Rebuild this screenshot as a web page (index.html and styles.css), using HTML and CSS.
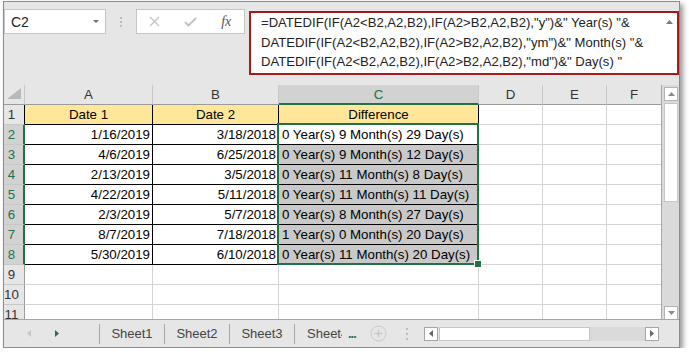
FILE: index.html
```html
<!DOCTYPE html>
<html lang="en">
<head>
    <meta charset="UTF-8">
    <meta name="viewport" content="width=device-width, initial-scale=1.0">
    <title>DATEDIF difference</title>
    <link rel="stylesheet" href="styles.css">
</head>
<body>

    <div class="window">
        <!-- formula bar -->
        <div class="formula-area">
            <div class="name-box">
                <span>C2</span>
                <svg width="6" height="3" viewBox="0 0 6 3"><polygon points="0,0 6,0 3,3" fill="#6b6b6b"/></svg>
            </div>
            <div class="vdots"><i></i><i></i><i></i></div>
            <div class="fx-box">
                <span class="fx-btn">
                    <svg width="11" height="11" viewBox="0 0 11 11"><path d="M1 1 L10 10 M10 1 L1 10" stroke="#c3c3c3" stroke-width="1.3" fill="none"/></svg>
                </span>
                <span class="fx-btn">
                    <svg width="13" height="10" viewBox="0 0 13 10"><path d="M1 5 L4.5 8.5 L12 1" stroke="#c3c3c3" stroke-width="2" fill="none"/></svg>
                </span>
                <span class="fx-btn fx">fx</span>
            </div>
            <div class="formula">
                <div class="formula-text">
                    <div>=DATEDIF(IF(A2&lt;B2,A2,B2),IF(A2&gt;B2,A2,B2),"y")&amp;" Year(s) "&amp;</div>
                    <div>DATEDIF(IF(A2&lt;B2,A2,B2),IF(A2&gt;B2,A2,B2),"ym")&amp;" Month(s) "&amp;</div>
                    <div>DATEDIF(IF(A2&lt;B2,A2,B2),IF(A2&gt;B2,A2,B2),"md")&amp;" Day(s) "</div>
                </div>
                <div class="formula-scroll">
                    <svg width="7" height="4" viewBox="0 0 7 4"><polygon points="0,4 7,4 3.5,0" fill="#7a7a7a"/></svg>
                </div>
            </div>
        </div>

        <!-- sheet -->
        <div class="sheet-area">
            <div class="grid">
                <div class="row hdr">
                    <div class="cell corner">
                        <svg width="20" height="19" viewBox="0 0 20 19"><polygon points="17,3 17,14 3,14" fill="#b9b9b9"/></svg>
                    </div>
                    <div class="cell">A</div>
                    <div class="cell">B</div>
                    <div class="cell sel">C</div>
                    <div class="cell">D</div>
                    <div class="cell">E</div>
                    <div class="cell last">F</div>
                </div>
                <div class="row">
                    <div class="cell rh r1">1</div>
                    <div class="cell tb head">Date 1</div>
                    <div class="cell tb head">Date 2</div>
                    <div class="cell tb head">Difference</div>
                    <div class="cell"></div><div class="cell"></div><div class="cell last"></div>
                </div>
                <div class="row">
                    <div class="cell rh sel">2</div>
                    <div class="cell tb num">1/16/2019</div>
                    <div class="cell tb num">3/18/2018</div>
                    <div class="cell tb diff">0 Year(s) 9 Month(s) 29 Day(s)</div>
                    <div class="cell"></div><div class="cell"></div><div class="cell last"></div>
                </div>
                <div class="row">
                    <div class="cell rh sel">3</div>
                    <div class="cell tb num">4/6/2019</div>
                    <div class="cell tb num">6/25/2018</div>
                    <div class="cell tb diff shade">0 Year(s) 9 Month(s) 12 Day(s)</div>
                    <div class="cell"></div><div class="cell"></div><div class="cell last"></div>
                </div>
                <div class="row">
                    <div class="cell rh sel">4</div>
                    <div class="cell tb num">2/13/2019</div>
                    <div class="cell tb num">3/5/2018</div>
                    <div class="cell tb diff shade">0 Year(s) 11 Month(s) 8 Day(s)</div>
                    <div class="cell"></div><div class="cell"></div><div class="cell last"></div>
                </div>
                <div class="row">
                    <div class="cell rh sel">5</div>
                    <div class="cell tb num">4/22/2019</div>
                    <div class="cell tb num">5/11/2018</div>
                    <div class="cell tb diff shade">0 Year(s) 11 Month(s) 11 Day(s)</div>
                    <div class="cell"></div><div class="cell"></div><div class="cell last"></div>
                </div>
                <div class="row">
                    <div class="cell rh sel">6</div>
                    <div class="cell tb num">2/3/2019</div>
                    <div class="cell tb num">5/7/2018</div>
                    <div class="cell tb diff shade">0 Year(s) 8 Month(s) 27 Day(s)</div>
                    <div class="cell"></div><div class="cell"></div><div class="cell last"></div>
                </div>
                <div class="row">
                    <div class="cell rh sel">7</div>
                    <div class="cell tb num">8/7/2019</div>
                    <div class="cell tb num">7/18/2018</div>
                    <div class="cell tb diff shade">1 Year(s) 0 Month(s) 20 Day(s)</div>
                    <div class="cell"></div><div class="cell"></div><div class="cell last"></div>
                </div>
                <div class="row">
                    <div class="cell rh sel">8</div>
                    <div class="cell tb num">5/30/2019</div>
                    <div class="cell tb num">6/10/2018</div>
                    <div class="cell tb diff shade">0 Year(s) 11 Month(s) 20 Day(s)</div>
                    <div class="cell"></div><div class="cell"></div><div class="cell last"></div>
                </div>
                <div class="row">
                    <div class="cell rh">9</div>
                    <div class="cell"></div><div class="cell"></div><div class="cell"></div>
                    <div class="cell"></div><div class="cell"></div><div class="cell last"></div>
                </div>
                <div class="row">
                    <div class="cell rh">10</div>
                    <div class="cell"></div><div class="cell"></div><div class="cell"></div>
                    <div class="cell"></div><div class="cell"></div><div class="cell last"></div>
                </div>
                <div class="row">
                    <div class="cell rh">11</div>
                    <div class="cell"></div><div class="cell"></div><div class="cell"></div>
                    <div class="cell"></div><div class="cell"></div><div class="cell last"></div>
                </div>

                <!-- selected range C2:C8 -->
                <div class="selection"><span class="handle"></span></div>
            </div>

            <div class="vscroll">
                <div class="sb-btn">
                    <svg width="7" height="4" viewBox="0 0 7 4"><polygon points="0,4 7,4 3.5,0" fill="#8a8a8a"/></svg>
                </div>
                <div class="sb-thumb"></div>
                <div class="sb-btn down">
                    <svg width="7" height="4" viewBox="0 0 7 4"><polygon points="0,0 7,0 3.5,4" fill="#8a8a8a"/></svg>
                </div>
            </div>
        </div>

        <!-- sheet tabs -->
        <div class="tabbar">
            <div class="tab-nav">
                <svg width="4" height="7" viewBox="0 0 4 7"><polygon points="4,0 4,7 0,3.5" fill="#c6c6c6"/></svg>
                <svg width="4" height="7" viewBox="0 0 4 7"><polygon points="0,0 0,7 4,3.5" fill="#217346"/></svg>
            </div>
            <div class="tab">Sheet1</div>
            <div class="tab">Sheet2</div>
            <div class="tab">Sheet3</div>
            <div class="tab cut">Sheet4</div>
            <div class="more">...</div>
            <svg class="add" width="17" height="17" viewBox="0 0 17 17">
                <circle cx="8.5" cy="8.5" r="7.5" stroke="#c8c8c8" stroke-width="1" fill="none"/>
                <path d="M8.5 4.5 V12.5 M4.5 8.5 H12.5" stroke="#c8c8c8" stroke-width="1.4"/>
            </svg>
            <div class="vdots small"><i></i><i></i><i></i></div>
            <div class="hscroll">
                <div class="hs-btn">
                    <svg width="4" height="7" viewBox="0 0 4 7"><polygon points="4,0 4,7 0,3.5" fill="#666"/></svg>
                </div>
                <div class="hs-thumb"></div>
                <div class="hs-track"></div>
                <div class="hs-btn">
                    <svg width="4" height="7" viewBox="0 0 4 7"><polygon points="0,0 0,7 4,3.5" fill="#666"/></svg>
                </div>
            </div>
        </div>
    </div>

</body>
</html>
```

FILE: styles.css
```css
body {
    margin: 0;
    background: #fff;
    font-family: "Liberation Sans", Arial, sans-serif;
}
.window {
    margin: 1px 0 0 3px;
    width: 675px;
    height: 345px;
    border: 1px solid #8c8c8c;
    background: #e6e6e6;
    box-shadow: 3px 3px 5px rgba(0, 0, 0, .4);
    display: flex;
    flex-direction: column;
    overflow: hidden;
}

/* formula bar */
.formula-area {
    height: 83px;
    flex-shrink: 0;
    display: flex;
    align-items: flex-start;
}
.formula-area > * {
    flex-shrink: 0;
}
.name-box {
    margin-top: 7px;
    width: 102px;
    height: 25px;
    box-sizing: border-box;
    background: #fff;
    border: 1px solid #c6c6c6;
    padding: 0 6px;
    display: flex;
    align-items: center;
    justify-content: space-between;
    font-size: 14px;
    color: #222;
}
.vdots {
    width: 30px;
    height: 25px;
    margin-top: 7px;
    display: flex;
    flex-direction: column;
    align-items: center;
    justify-content: center;
    gap: 2px;
}
.vdots i {
    width: 2px;
    height: 2px;
    background: #bdbdbd;
}
.fx-box {
    margin-top: 7px;
    width: 109px;
    height: 25px;
    box-sizing: border-box;
    background: #fff;
    border: 1px solid #c6c6c6;
    display: flex;
    align-items: center;
}
.fx-btn {
    flex: 1;
    display: flex;
    justify-content: center;
    align-items: center;
}
.fx {
    font-family: "Liberation Serif", serif;
    font-style: italic;
    font-size: 14px;
    color: #555;
}
.formula {
    margin: 9px 0 0 4px;
    width: 430px;
    height: 64px;
    box-sizing: border-box;
    border: 2px solid #a61b1b;
    background: #fff;
    display: flex;
}
.formula-text {
    flex: 1;
    min-width: 0;
    padding-left: 10px;
    font-size: 13.1px;
    line-height: 19.5px;
    color: #222;
    white-space: nowrap;
    overflow: hidden;
}
.formula-scroll {
    width: 16px;
    flex-shrink: 0;
    padding-top: 7px;
    display: flex;
    justify-content: center;
    align-items: flex-start;
}

/* grid */
.sheet-area {
    height: 234px;
    flex-shrink: 0;
    display: flex;
}
.grid {
    width: 657px;
    flex-shrink: 0;
    position: relative;
    overflow: hidden;
    background: #fff;
}
.row {
    display: grid;
    grid-template-columns: 21px 128px 126px 200px 64px 64px 54px;
    height: 20px;
}
.cell {
    box-sizing: border-box;
    border-right: 1px solid #d4d4d4;
    border-bottom: 1px solid #d4d4d4;
    padding: 0 2px;
    font-size: 13.3px;
    line-height: 19px;
    color: #000;
    white-space: nowrap;
    overflow: hidden;
}
.cell.last {
    border-right: none;
}
.hdr .cell {
    background: #e6e6e6;
    border-right-color: #c8c8c8;
    border-bottom-color: #9b9b9b;
    text-align: center;
    color: #333;
}
.hdr .cell.sel {
    background: #d2d2d2;
    color: #217346;
    border-bottom: 2px solid #217346;
}
.hdr .corner {
    padding: 0;
}
.hdr .corner svg {
    display: block;
}
.rh {
    background: #e6e6e6;
    border-right-color: #9b9b9b;
    border-bottom-color: #c8c8c8;
    text-align: center;
    padding: 0 5px 0 0;
    color: #333;
}
.rh.r1 {
    border-right-color: #000;
}
.rh.sel {
    background: #d2d2d2;
    color: #217346;
    border-right: 2px solid #217346;
    padding-right: 4px;
}
.tb {
    border-right-color: #000;
    border-bottom-color: #000;
}
.head {
    background: #ffe699;
    text-align: center;
}
.num {
    text-align: right;
}
.diff {
    padding-left: 3px;
}
.shade {
    background: #c9c9c9;
}
.selection {
    position: absolute;
    left: 273px;
    top: 38px;
    width: 202px;
    height: 142px;
    box-sizing: border-box;
    border: 2px solid #217346;
}
.handle {
    position: absolute;
    right: -5px;
    bottom: -5px;
    width: 6px;
    height: 6px;
    background: #217346;
    border: 1px solid #fff;
}

/* vertical scrollbar */
.vscroll {
    width: 18px;
    flex-shrink: 0;
    box-sizing: border-box;
    border-left: 1px solid #a6a6a6;
    background: #dadada;
    padding: 2px 0 0 2px;
    display: flex;
    flex-direction: column;
}
.sb-btn {
    width: 14px;
    height: 14px;
    box-sizing: border-box;
    border: 1px solid #b4b4b4;
    background: #fff;
    display: flex;
    justify-content: center;
    align-items: center;
}
.sb-btn.down {
    margin-top: auto;
    height: 13px;
    border-bottom: none;
}
.sb-thumb {
    margin-top: 2px;
    width: 14px;
    height: 99px;
    box-sizing: border-box;
    border: 1px solid #c6c6c6;
    background: #fff;
}

/* sheet tabs */
.tabbar {
    flex: 1;
    border-top: 1px solid #a6a6a6;
    display: flex;
    align-items: center;
}
.tabbar > * {
    flex-shrink: 0;
}
.tab-nav {
    width: 95px;
    box-sizing: border-box;
    padding-left: 23px;
    display: flex;
    align-items: center;
    gap: 24px;
}
.tab-nav svg {
    display: block;
}
.tab {
    width: 64px;
    height: 20px;
    border-left: 1px solid #a6a6a6;
    line-height: 20px;
    text-align: center;
    font-size: 13px;
    color: #444;
    white-space: nowrap;
}
.tab.cut {
    padding-left: 12px;
    width: 35px;
    text-align: left;
    overflow: hidden;
}
.more {
    margin-left: 6px;
    color: #217346;
    font-size: 13px;
    font-weight: bold;
    letter-spacing: -1px;
}
.add {
    margin-left: 14px;
    display: block;
}
.vdots.small {
    width: 3px;
    height: 16px;
    margin: 0 0 0 19px;
    gap: 3px;
}
.hscroll {
    margin-left: 15px;
    width: 235px;
    height: 14px;
    display: flex;
}
.hs-btn {
    width: 14px;
    height: 14px;
    flex-shrink: 0;
    box-sizing: border-box;
    border: 1px solid #a6a6a6;
    background: #fff;
    display: flex;
    justify-content: center;
    align-items: center;
}
.hs-thumb {
    margin-left: 1px;
    width: 151px;
    flex-shrink: 0;
    box-sizing: border-box;
    border: 1px solid #c6c6c6;
    background: #fff;
}
.hs-track {
    flex: 1;
    background: #dadada;
}
```
